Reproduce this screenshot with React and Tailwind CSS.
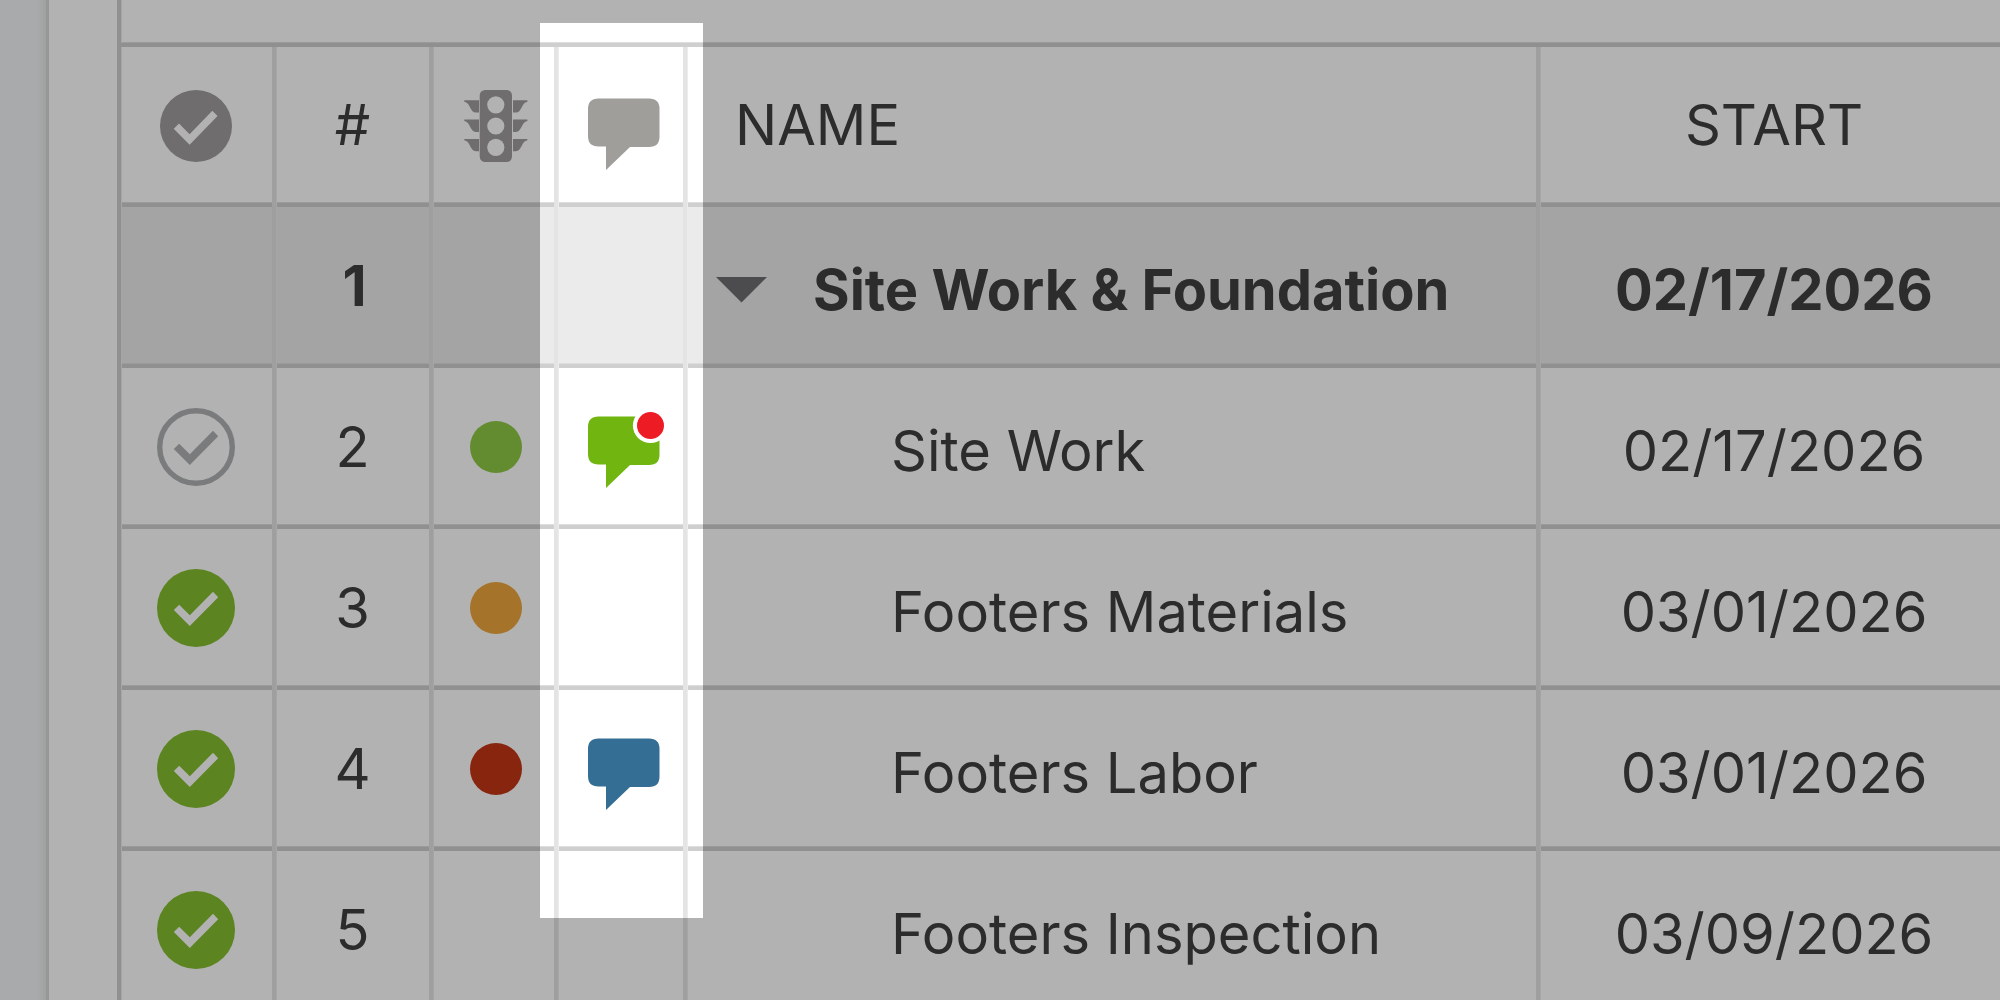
const rows = [
  { id: 2, name: "Site Work", start: "02/17/2026", done: false, status: "#8fc846", comment: "#70b510", unread: true },
  { id: 3, name: "Footers Materials", start: "03/01/2026", done: true, status: "#eda63d" },
  { id: 4, name: "Footers Labor", start: "03/01/2026", done: true, status: "#c23615", comment: "#356e94" },
  { id: 5, name: "Footers Inspection", start: "03/09/2026", done: true },
];

const cell =
  "border-r-4 border-[#e4e4e4] p-0 shadow-[inset_1px_0_0_#ececec,inset_0_-4px_0_#cfcfcf,inset_0_-5px_0_#dedede]";

function HeaderCheck() {
  return (
    <svg viewBox="0 0 72 72" className="mx-auto size-[72px]" aria-label="Complete" role="img">
      <circle cx="36" cy="36" r="36" fill="#9f9c9d" />
      <path d="M13.7 38.7 19 33.6 29.6 44.2 52.3 20.7 57.6 26 29.6 54.7Z" fill="#fff" />
    </svg>
  );
}

function TaskCheck({ done, label }) {
  return (
    <label className="mx-auto block size-[78px] cursor-pointer">
      <input type="checkbox" defaultChecked={done} aria-label={label} className="peer sr-only" />
      <svg viewBox="0 0 78 78" className="size-[78px] fill-none text-[#afb1b3] peer-checked:hidden">
        <circle cx="39" cy="39" r="36.3" stroke="currentColor" strokeWidth="5.4" />
        <path d="M16.8 41 22.2 35.8 32.8 46.2 56 22.8 61.2 28.2 32.8 57Z" fill="currentColor" />
      </svg>
      <svg viewBox="0 0 78 78" className="hidden size-[78px] peer-checked:block">
        <circle cx="39" cy="39" r="39" fill="#85bd2f" />
        <path d="M16.8 41 22.2 35.8 32.8 46.2 56 22.8 61.2 28.2 32.8 57Z" fill="#fff" />
      </svg>
    </label>
  );
}

function TrafficLight() {
  return (
    <svg viewBox="0 0 64 72" className="mx-auto h-[72px] w-16" aria-label="Status" role="img">
      <g fill="#9f9c9d">
        <rect x="15.7" y="0" width="32.3" height="72" rx="5.5" />
        {[10.3, 29.6, 48.9].map((y) => (
          <g key={y} transform={`translate(0 ${y})`}>
            <path d="M.3 0H15V12.3H12C5.6 12.3 6.6 2 .3 1.4Z" />
            <path d="M63.4 0H49V12.3H51.8C58.2 12.3 57.2 2 63.4 1.4Z" />
          </g>
        ))}
      </g>
      <circle cx="31.8" cy="14.8" r="8.6" fill="#fff" />
      <circle cx="31.8" cy="36" r="8.6" fill="#fff" />
      <circle cx="31.8" cy="57.3" r="8.6" fill="#fff" />
    </svg>
  );
}

function Bubble({ color, unread }) {
  return (
    <svg viewBox="0 0 78 78" className="block size-[78px]" aria-hidden="true">
      <path
        d="M10.5 6.5H61Q71.5 6.5 71.5 17V44.5Q71.5 55 61 55H42L18 78V54.5H10.5Q0 54.5 0 44V17Q0 6.5 10.5 6.5Z"
        fill={color}
      />
      {unread && <circle cx="62.5" cy="15.5" r="17.6" fill="#fff" />}
      {unread && <circle cx="62.5" cy="15.5" r="13.5" fill="#ed1c24" />}
    </svg>
  );
}

export default function App() {
  return (
    <div className="flex h-screen overflow-hidden bg-white font-['Inter',sans-serif] text-[56px] leading-[68px] text-[#404040]">
      <aside className="flex w-[49px] shrink-0 justify-end border-r-[3px] border-[#d9d9d9] bg-[#f1f4f7]">
        <div className="w-[9px] bg-linear-to-r from-[#f1f4f7] to-[#e6e6e6]" />
      </aside>
      <main className="relative ml-[68px] min-w-0 flex-1 border-l-4 border-[#cfcfcf]">
        <div className="h-[47px] border-b-4 border-[#cfcfcf] shadow-[inset_1px_0_0_#ececec,inset_0_-1px_0_#dedede]" />
        <table className="w-[calc(100%+12px)] table-fixed border-separate border-spacing-0">
          <colgroup>
            <col className="w-[155px]" />
            <col className="w-[157px]" />
            <col className="w-[125px]" />
            <col className="w-[129px]" />
            <col />
            <col className="w-[472px]" />
          </colgroup>
          <thead>
            <tr className="h-40">
              <th className={`${cell} pr-0.5 pb-0.5`}><HeaderCheck /></th>
              <th className={`${cell} pb-1 font-normal`}>#</th>
              <th className={`${cell} pb-0.5 pl-1`}><TrafficLight /></th>
              <th className={`${cell} pt-2 pl-[30px]`} aria-label="Comments"><Bubble color="#9f9e9b" /></th>
              <th className={`${cell} pb-1 pl-12 text-left font-normal`}>NAME</th>
              <th className={`${cell} pb-1 font-normal`}>START</th>
            </tr>
          </thead>
          <tbody>
            <tr className="h-[161px] bg-[#ebebeb] font-bold">
              <td className={cell} />
              <td className={`${cell} pb-1 pl-1 text-center`}>1</td>
              <td className={cell} />
              <td className={cell} />
              <td className={`${cell} pt-1`}>
                <div className="flex items-center gap-[46px] pl-7">
                  <button type="button" aria-label="Collapse group" className="cursor-pointer">
                    <svg viewBox="0 0 52 26" className="block h-[26px] w-[52px]">
                      <path d="M1 0H52L26.5 25.5Z" fill="#6e6e72" />
                    </svg>
                  </button>
                  <span className="whitespace-nowrap">Site Work &amp; Foundation</span>
                </div>
              </td>
              <td className={`${cell} pt-1 text-center`}>02/17/2026</td>
            </tr>
            {rows.map((r) => (
              <tr key={r.id} className="h-[161px]">
                <td className={`${cell} pr-0.5 pb-1`}><TaskCheck done={r.done} label={`${r.name} complete`} /></td>
                <td className={`${cell} pb-1 text-center`}>{r.id}</td>
                <td className={`${cell} pb-1 pl-1`}>
                  {r.status && <div className="mx-auto size-[52px] rounded-full" style={{ backgroundColor: r.status }} />}
                </td>
                <td className={`${cell} pl-[30px]`}>
                  {r.comment && (
                    <button type="button" aria-label={`Comments on ${r.name}`} className="block cursor-pointer">
                      <Bubble color={r.comment} unread={r.unread} />
                    </button>
                  )}
                </td>
                <td className={`${cell} pt-1 pl-[204px] whitespace-nowrap`}>{r.name}</td>
                <td className={`${cell} pt-1 text-center`}>{r.start}</td>
              </tr>
            ))}
          </tbody>
        </table>
        <div className="pointer-events-none absolute top-[23px] left-[419px] h-[895px] w-[163px] shadow-[0_0_0_3000px_rgba(0,0,0,0.3)]" />
      </main>
    </div>
  );
}
